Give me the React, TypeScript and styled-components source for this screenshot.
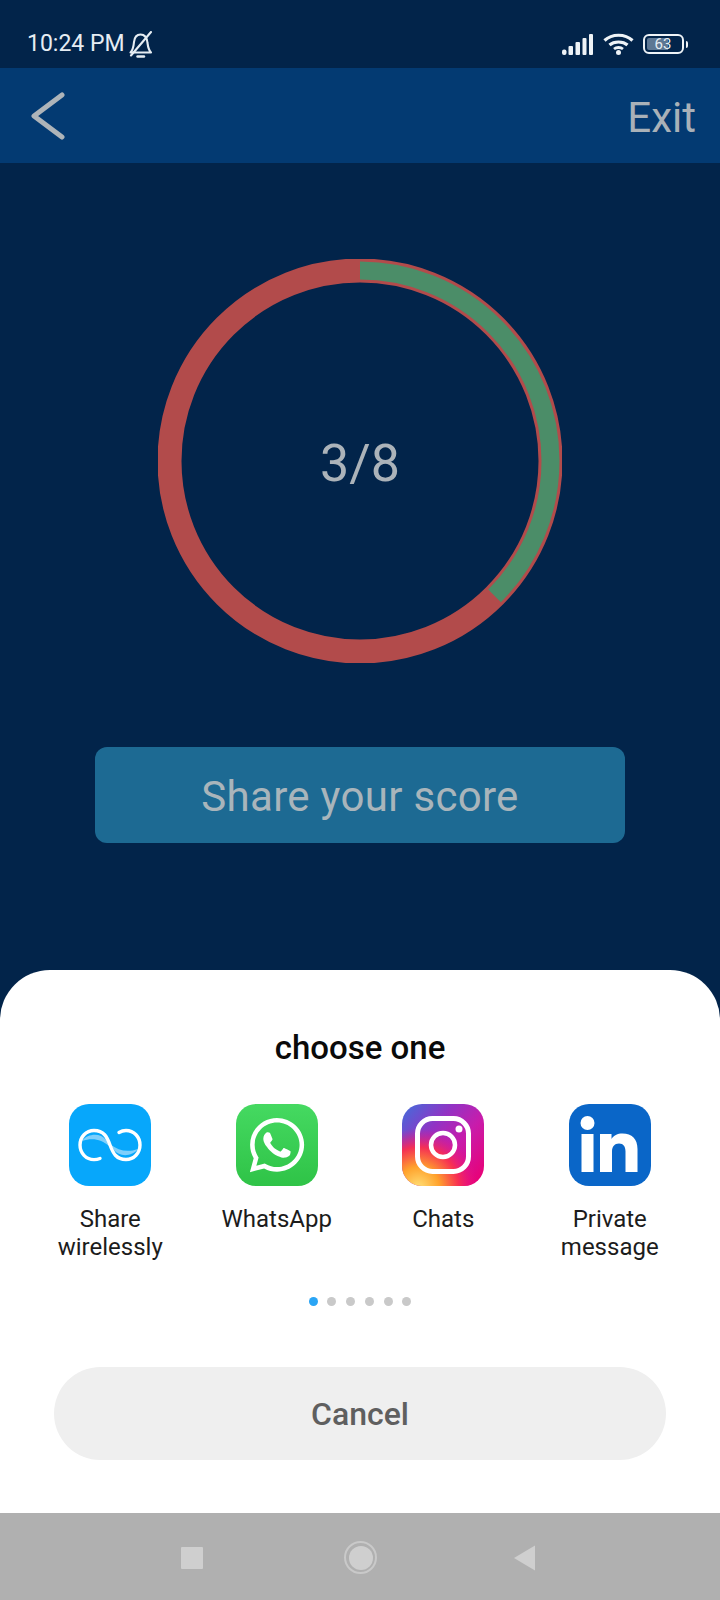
import React from "react";
import styled, { createGlobalStyle } from "styled-components";
import { FaWhatsapp } from "react-icons/fa";

const Global = createGlobalStyle`
  html, body { margin: 0; padding: 0; background: #02254b; }
  * { box-sizing: border-box; }
  body { font-family: Roboto, "Liberation Sans", sans-serif; }
`;

const Page = styled.div`
  width: 720px;
  height: 1600px;
  display: flex;
  flex-direction: column;
  background: #02244a;
  overflow: hidden;
`;

const StatusBar = styled.div`
  height: 68px;
  flex: none;
  padding: 20px 32px 0 27px;
  display: flex;
  align-items: center;
  justify-content: space-between;
  color: #e6edf3;
`;

const StatusGroup = styled.div<{ $gap: number }>`
  display: flex;
  align-items: center;
  gap: ${(p) => p.$gap}px;
`;

const Clock = styled.span`
  font-size: 23px;
  line-height: 28px;
`;

const Battery = styled.div`
  display: flex;
  align-items: center;
  gap: 2px;
`;

const BatteryBody = styled.div<{ $level: number }>`
  width: 41px;
  height: 20px;
  border: 2.5px solid #eef3f7;
  border-radius: 6px;
  padding: 2px;
  display: flex;
  align-items: center;
  justify-content: center;
  font-size: 15px;
  line-height: 1;
  color: #e6edf3;
  background: linear-gradient(
      90deg,
      #5d7794 ${(p) => p.$level}%,
      transparent ${(p) => p.$level}%
    )
    content-box;
`;

const BatteryTip = styled.div`
  width: 2.5px;
  height: 7px;
  border-radius: 0 2px 2px 0;
  background: #eef3f7;
`;

const Header = styled.header`
  height: 95px;
  flex: none;
  background: #033a72;
  padding: 0 24px 0 30px;
  display: flex;
  align-items: center;
  justify-content: space-between;
`;

const ExitLabel = styled.span`
  font-size: 42px;
  line-height: 48px;
  margin-top: 4px;
  color: #a9b1b8;
`;

const Main = styled.main`
  height: 807px;
  flex: none;
  padding-top: 96px;
  display: flex;
  flex-direction: column;
  align-items: center;
  gap: 84px;
`;

const Ring = styled.div`
  width: 404px;
  height: 404px;
  display: grid;
  place-items: center;
  > * {
    grid-area: 1 / 1;
  }
`;

const Score = styled.span`
  font-size: 52px;
  line-height: 60px;
  color: #acb3b9;
  margin-top: 6px;
`;

const ShareButton = styled.button`
  width: 530px;
  height: 96px;
  border: 0;
  border-radius: 12px;
  padding: 2px 0 0;
  background: #1d6a93;
  color: #a9b5bb;
  font-family: inherit;
  font-size: 42px;
  letter-spacing: 0.3px;
`;

const Sheet = styled.section`
  height: 543px;
  flex: none;
  background: #fff;
  border-radius: 50px 50px 0 0;
  padding-top: 58px;
  display: flex;
  flex-direction: column;
  align-items: center;
`;

const Title = styled.h2`
  margin: 0;
  font-size: 33px;
  line-height: 40px;
  font-weight: 500;
  color: #0a0a0a;
`;

const AppGrid = styled.div`
  width: 100%;
  margin-top: 36px;
  padding: 0 27px;
  display: grid;
  grid-template-columns: repeat(4, 1fr);
`;

const AppItem = styled.div`
  display: flex;
  flex-direction: column;
  align-items: center;
  gap: 19px;
`;

const AppIcon = styled.svg`
  width: 82px;
  height: 82px;
  display: block;
`;

const WhatsTile = styled.div`
  width: 82px;
  height: 82px;
  border-radius: 20px;
  background: linear-gradient(180deg, #45d961, #2fc347);
  display: flex;
  align-items: center;
  justify-content: center;
  color: #fff;
`;

const AppLabel = styled.span`
  font-size: 24px;
  line-height: 28px;
  height: 56px;
  text-align: center;
  color: #1c1c1c;
`;

const Dots = styled.div`
  margin-top: 36px;
  display: flex;
  gap: 9.7px;
`;

const Dot = styled.span<{ $active?: boolean }>`
  width: 9px;
  height: 9px;
  border-radius: 50%;
  background: ${(p) => (p.$active ? "#2aa5f5" : "#c9c9c9")};
`;

const CancelButton = styled.button`
  margin-top: 61px;
  width: 612px;
  height: 93px;
  border: 0;
  border-radius: 47px;
  background: #efefef;
  color: #5f5f5f;
  font-family: inherit;
  font-size: 32px;
  font-weight: 500;
`;

const NavBar = styled.nav`
  height: 87px;
  flex: none;
  padding: 2px 0 0 181px;
  background: #b0b0b0;
  display: flex;
  align-items: center;
`;

const NavSquare = styled.div`
  width: 22px;
  height: 22px;
  border-radius: 1px;
  background: #cfcfcf;
`;

const NavHome = styled.div`
  width: 33px;
  height: 33px;
  margin: 0 137.5px 0 140.5px;
  border-radius: 50%;
  border: 2.5px solid #c9c9c9;
  padding: 2.5px;
  background: #cfcfcf content-box;
`;

const NavBack = styled.svg`
  width: 22px;
  height: 26px;
`;

const SignalIcon = () => (
  <svg width="32" height="21" viewBox="0 0 32 21" fill="#eef3f7">
    <rect x="0" y="15.5" width="4.5" height="5.5" rx="2" />
    <rect x="6.5" y="12" width="4.5" height="9" rx="1" />
    <rect x="13.5" y="8" width="4.5" height="13" rx="1" />
    <rect x="20.5" y="4" width="4" height="17" rx="1" />
    <rect x="27" y="0" width="4" height="21" rx="1" />
  </svg>
);

const WifiIcon = () => (
  <svg width="31" height="22" viewBox="0 0 31 22" fill="none" stroke="#eef3f7" strokeWidth="3.2">
    <path d="M1.5 7.5 C9 .5 22 .5 29.5 7.5" />
    <path d="M6.5 12 C11 8 20 8 24.5 12" />
    <path d="M11 16 C13.5 14 17.5 14 20 16" strokeWidth="2.8" />
    <circle cx="15.5" cy="19.5" r="2.5" fill="#eef3f7" stroke="none" />
  </svg>
);

const BellOffIcon = () => (
  <svg width="24" height="27" viewBox="0 0 24 27" fill="none" stroke="#e6edf3" strokeWidth="2.1" strokeLinecap="round" strokeLinejoin="round">
    <path d="M1.5 21.5 H22 C19.5 19 19 16 18.5 12 C18 7 15.5 3.5 11.5 3.5 C7.5 3.5 5.5 6.5 5 11 C4.6 15.5 4 19 1.5 21.5 Z" />
    <path d="M8.5 25.5 H15" strokeWidth="2.4" />
    <path d="M22 1 L2 24.5" />
  </svg>
);

const ChevronIcon = () => (
  <svg width="36" height="48" viewBox="0 0 36 48" fill="none" stroke="#aeb4b9" strokeWidth="5" strokeLinecap="round" strokeLinejoin="round">
    <path d="M32 3 L4 24 L32 45" />
  </svg>
);

const ScoreRing = ({ score, total }: { score: number; total: number }) => {
  const r = 190.5;
  const c = 2 * Math.PI * r;
  return (
    <svg width="404" height="404" viewBox="0 0 404 404" fill="none">
      <circle cx="202" cy="202" r={r} stroke="#b24b4b" strokeWidth="24" />
      <circle
        cx="202"
        cy="202"
        r={r}
        stroke="#4b8d68"
        strokeWidth="18"
        strokeDasharray={`${(c * score) / total} ${c}`}
        transform="rotate(-90 202 202)"
      />
    </svg>
  );
};

const ShareIcon = () => (
  <AppIcon viewBox="0 0 82 82">
    <rect width="82" height="82" rx="20" fill="#07a7fb" />
    <path d="M13 37 C19 29 32 29 37 36 C38 38 39 40 40 42 C33 36 24 33 13 37 Z" fill="#7fcffb" />
    <path d="M69 45 C63 53 50 53 45 46 C44 44 43 43 42 41 C49 46 58 49 69 45 Z" fill="#7fcffb" />
    <path
      d="M31 54.5 C29 55.3 27 55.6 25 55.6 C17 55.6 11 49 11 41 C11 33 17 26.5 25 26.5 C35 26.5 38 33 41 41 C44 49 47 55.5 57 55.5 C65 55.5 71 49 71 41 C71 33 65 26.5 57 26.5 C54 26.5 52 27.3 50 28.5"
      fill="none"
      stroke="#fff"
      strokeWidth="3.4"
      strokeLinecap="round"
    />
  </AppIcon>
);

const InstagramIcon = () => (
  <AppIcon viewBox="0 0 82 82">
    <defs>
      <linearGradient id="igBase" x1="0" y1="0" x2="1" y2="0.9">
        <stop offset="0" stopColor="#3f6fdc" />
        <stop offset="0.35" stopColor="#9233c4" />
        <stop offset="0.62" stopColor="#c81cab" />
        <stop offset="1" stopColor="#ea0074" />
      </linearGradient>
      <radialGradient id="igWarm" cx="0.2" cy="1.02" r="0.85">
        <stop offset="0" stopColor="#ffe077" />
        <stop offset="0.3" stopColor="#ffa22c" />
        <stop offset="0.58" stopColor="#f9304f" stopOpacity="0.95" />
        <stop offset="0.85" stopColor="#e8108a" stopOpacity="0" />
      </radialGradient>
    </defs>
    <rect width="82" height="82" rx="20" fill="url(#igBase)" />
    <rect width="82" height="82" rx="20" fill="url(#igWarm)" />
    <rect x="15.5" y="14.5" width="51" height="53" rx="15" fill="none" stroke="#fff" strokeWidth="5" />
    <circle cx="41" cy="41" r="12" fill="none" stroke="#fff" strokeWidth="4.5" />
    <circle cx="57" cy="25" r="3.5" fill="#fff" />
  </AppIcon>
);

const LinkedinIcon = () => (
  <AppIcon viewBox="0 0 82 82">
    <rect width="82" height="82" rx="20" fill="#0a66c8" />
    <circle cx="18.5" cy="19" r="7" fill="#fff" />
    <rect x="12.5" y="30" width="12" height="38" fill="#fff" />
    <path
      d="M31 30 H42.5 V35 C44.5 31.5 48.5 29.5 53.5 29.5 C63 29.5 68.5 35 68.5 45 V68 H56.5 V47.5 C56.5 42.5 54.5 39.5 50 39.5 C45.5 39.5 43 42.5 43 47.5 V68 H31 Z"
      fill="#fff"
    />
  </AppIcon>
);

const apps: { icon: React.ReactNode; label: React.ReactNode }[] = [
  { icon: <ShareIcon />, label: <>Share<br />wirelessly</> },
  { icon: <WhatsTile><FaWhatsapp size={62} /></WhatsTile>, label: "WhatsApp" },
  { icon: <InstagramIcon />, label: "Chats" },
  { icon: <LinkedinIcon />, label: <>Private<br />message</> },
];

export default function App() {
  return (
    <Page>
      <Global />
      <StatusBar>
        <StatusGroup $gap={4}>
          <Clock>10:24 PM</Clock>
          <BellOffIcon />
        </StatusGroup>
        <StatusGroup $gap={9}>
          <SignalIcon />
          <WifiIcon />
          <Battery>
            <BatteryBody $level={63}>63</BatteryBody>
            <BatteryTip />
          </Battery>
        </StatusGroup>
      </StatusBar>
      <Header>
        <ChevronIcon />
        <ExitLabel>Exit</ExitLabel>
      </Header>
      <Main>
        <Ring>
          <ScoreRing score={3} total={8} />
          <Score>3/8</Score>
        </Ring>
        <ShareButton>Share your score</ShareButton>
      </Main>
      <Sheet>
        <Title>choose one</Title>
        <AppGrid>
          {apps.map((app, i) => (
            <AppItem key={i}>
              {app.icon}
              <AppLabel>{app.label}</AppLabel>
            </AppItem>
          ))}
        </AppGrid>
        <Dots>
          {[0, 1, 2, 3, 4, 5].map((i) => (
            <Dot key={i} $active={i === 0} />
          ))}
        </Dots>
        <CancelButton>Cancel</CancelButton>
      </Sheet>
      <NavBar>
        <NavSquare />
        <NavHome />
        <NavBack viewBox="0 0 22 26">
          <path d="M0 13 L21 0.5 V25.5 Z" fill="#cfcfcf" />
        </NavBack>
      </NavBar>
    </Page>
  );
}
